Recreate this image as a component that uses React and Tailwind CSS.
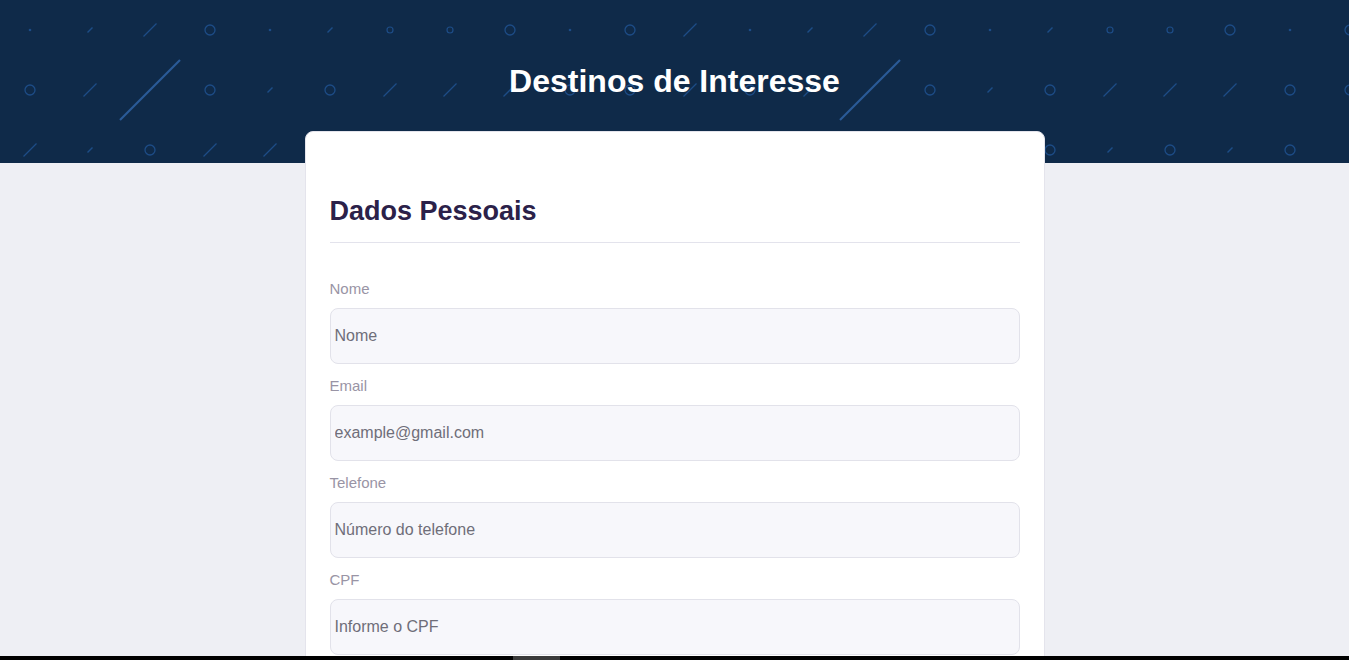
import React from "react";

// header pattern: one row per line, one cell every 60px
// d = dot, s = small slash, m = medium slash, L = long slash, c = small ring, C = ring
const rows = [
  "d s m C d s c c C d C m d s m C d s c c C d C",
  "C m L C s C m m m C C m C m L C s C m m m C C",
  "m s C m m C m s C d s C m m C d s C s C s C",
];

const Mark = ({ kind, x, y }) => {
  const stroke = "#1d4c86";
  if (kind === "d") return <circle cx={x} cy={y} r="1.3" fill={stroke} />;
  if (kind === "c")
    return <circle cx={x} cy={y} r="3" fill="none" stroke={stroke} strokeWidth="1.2" />;
  if (kind === "C")
    return <circle cx={x} cy={y} r="5" fill="none" stroke={stroke} strokeWidth="1.3" />;
  if (kind === "s")
    return <line x1={x - 2.5} y1={y + 2.5} x2={x + 2.5} y2={y - 2.5} stroke={stroke} strokeWidth="1.4" />;
  if (kind === "m")
    return <line x1={x - 6.5} y1={y + 6.5} x2={x + 6.5} y2={y - 6.5} stroke={stroke} strokeWidth="1.3" />;
  if (kind === "L")
    return <line x1={x - 30} y1={y + 30} x2={x + 30} y2={y - 30} stroke="#2a5b98" strokeWidth="2.2" />;
  return null;
};

const HeaderPattern = () => (
  <svg className="absolute inset-0 h-full w-full" aria-hidden="true">
    {rows.map((row, r) =>
      row.split(" ").map((kind, i) => (
        <Mark key={`${r}-${i}`} kind={kind} x={30 + i * 60} y={30 + r * 60} />
      ))
    )}
  </svg>
);

const Field = ({ label, placeholder, type = "text" }) => (
  <div className="mb-[12px]">
    <label className="block text-[15px] leading-[20px] text-[#9994a5]">{label}</label>
    <input
      type={type}
      placeholder={placeholder}
      className="mt-[9px] block h-[56px] w-full rounded-[8px] border border-[#e2e2ea] bg-[#f7f7fb] pl-[4px] text-[16px] text-[#4a4a55] outline-none placeholder:text-[#6f6e79]"
    />
  </div>
);

export default function App() {
  return (
    <div
      className="min-h-screen bg-[#eeeff4]"
      style={{ fontFamily: '"Liberation Sans", Arial, sans-serif' }}
    >
      {/* Banner */}
      <div className="relative h-[163px] overflow-hidden bg-[#0f2a49]">
        <HeaderPattern />
        <h1 className="relative pt-[62px] text-center text-[32px] font-bold leading-[38px] text-white">
          Destinos de Interesse
        </h1>
      </div>

      {/* Form card */}
      <div className="relative mx-auto -mt-[32px] w-[740px] rounded-[8px] border border-[#e4e4ec] bg-white px-[24px] pb-[40px] pt-[63px]">
        <h2 className="border-b border-[#e3e3ec] pb-[15px] text-[27px] font-bold leading-[32px] text-[#2b2149]">
          Dados Pessoais
        </h2>

        <div className="pt-[36px]">
          <Field label="Nome" placeholder="Nome" />
          <Field label="Email" placeholder="example@gmail.com" type="email" />
          <Field label="Telefone" placeholder="Número do telefone" />
          <Field label="CPF" placeholder="Informe o CPF" />
        </div>
      </div>

      {/* bottom strip */}
      <div className="fixed bottom-0 left-0 right-0 flex h-[4px] bg-black">
        <div className="ml-[513px] w-[47px] bg-[#3a3a3a]" />
      </div>
    </div>
  );
}
